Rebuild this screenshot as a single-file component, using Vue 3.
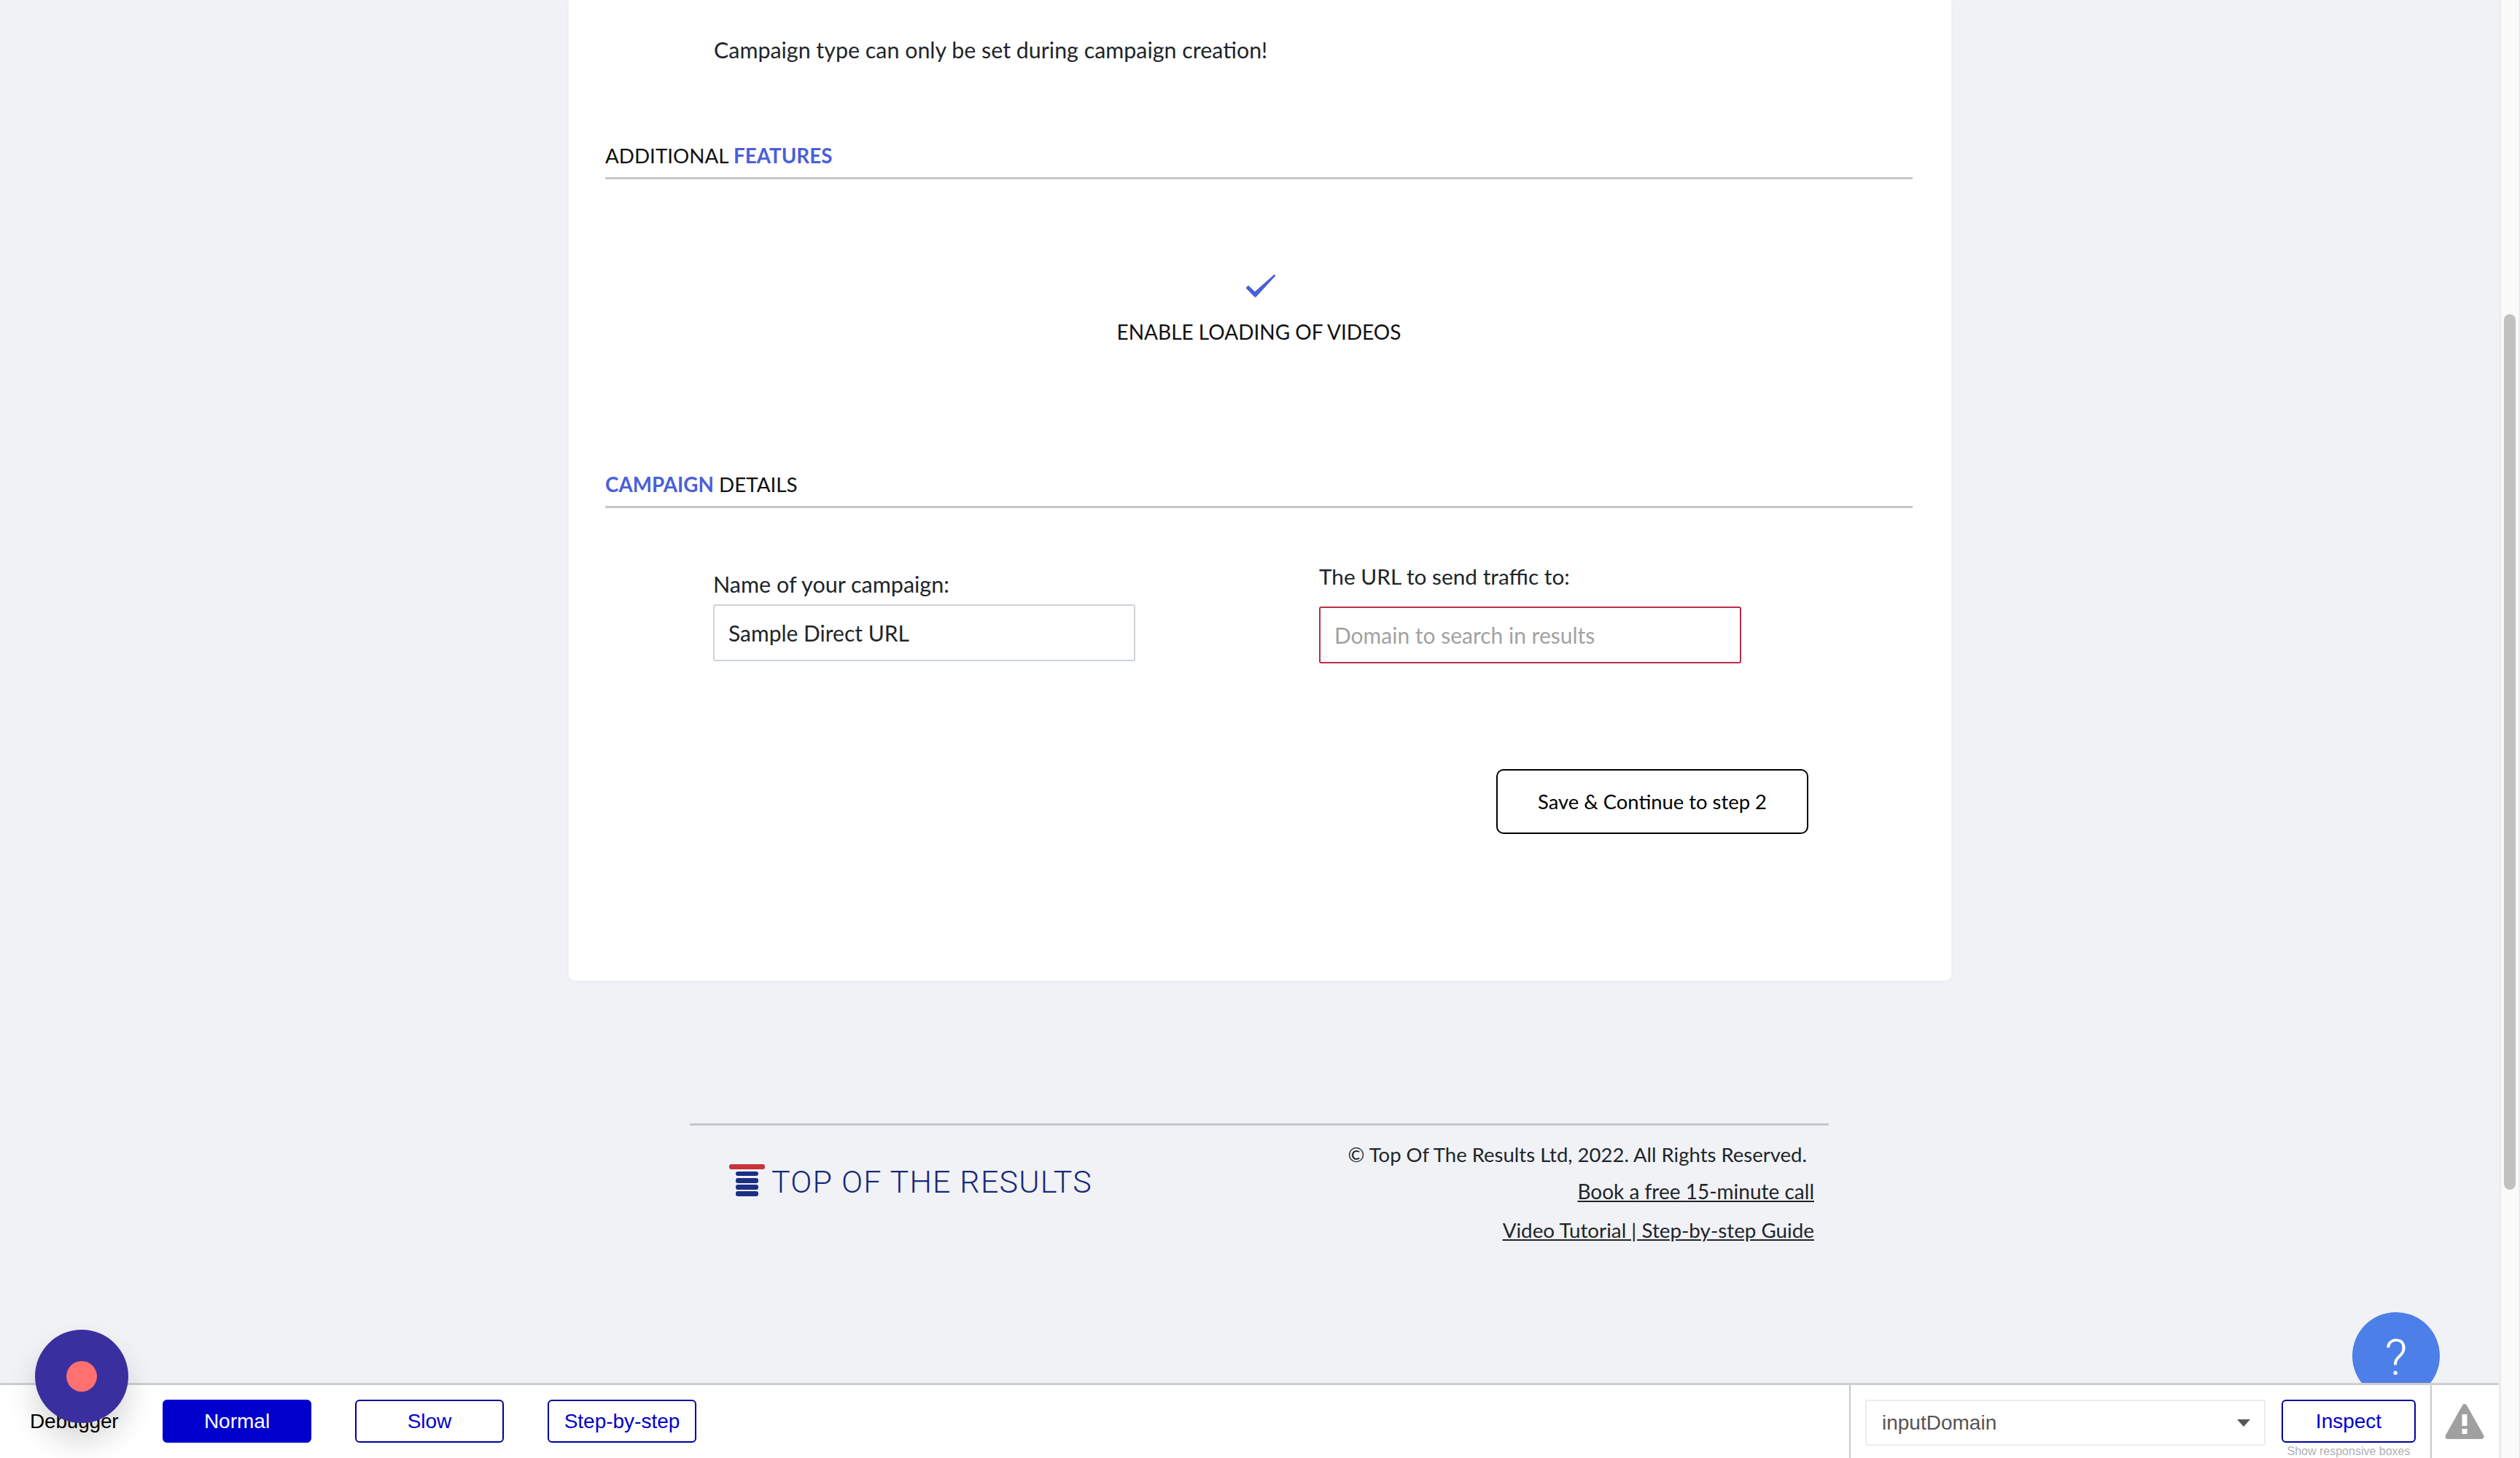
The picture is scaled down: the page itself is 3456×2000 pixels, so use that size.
<script setup>
const modes = [
  { label: 'Normal', active: true },
  { label: 'Slow', active: false },
  { label: 'Step-by-step', active: false },
]
const logoBars = [0, 1, 2, 3]
</script>

<template>
  <div class="page">
    <main class="card">
      <p class="note">Campaign type can only be set during campaign creation!</p>

      <h2 class="heading heading-first">ADDITIONAL <b>FEATURES</b></h2>

      <div class="feature">
        <svg class="check" width="42" height="32" viewBox="0 0 42 32">
          <path d="M0.5 19 L4 15.5 L13 24 L39.5 0.5 L41.5 2 L14.5 31.5 L12.5 31.5 Z" fill="#4a5fd8" />
        </svg>
        <div class="feature-label">ENABLE LOADING OF VIDEOS</div>
      </div>

      <h2 class="heading heading-second"><b>CAMPAIGN</b> DETAILS</h2>

      <div class="fields">
        <div class="field field-name">
          <label class="label label-name">Name of your campaign:</label>
          <input class="input" type="text" value="Sample Direct URL" />
        </div>
        <div class="field field-url">
          <label class="label label-url">The URL to send traffic to:</label>
          <input class="input input-error" type="text" placeholder="Domain to search in results" />
        </div>
      </div>

      <div class="actions">
        <button class="save">Save &amp; Continue to step 2</button>
      </div>
    </main>

    <footer class="footer">
      <div class="logo">
        <div class="logo-mark">
          <span class="logo-top"></span>
          <span v-for="b in logoBars" :key="b" class="logo-bar"></span>
        </div>
        <span class="logo-text">TOP OF THE RESULTS</span>
      </div>
      <div class="footer-links">
        <div class="copy">© Top Of The Results Ltd, 2022. All Rights Reserved.</div>
        <a class="flink flink-book">Book a free 15-minute call</a>
        <a class="flink flink-video">Video Tutorial | Step-by-step Guide</a>
      </div>
    </footer>

    <div class="help">?</div>

    <div class="debugbar">
      <div class="debug-left">
        <span class="debug-title">Debugger</span>
        <div class="modes">
          <button v-for="m in modes" :key="m.label" class="mode" :class="{ active: m.active }">{{ m.label }}</button>
        </div>
      </div>
      <div class="debug-right">
        <div class="select">
          <span>inputDomain</span>
          <svg width="18" height="10" viewBox="0 0 18 10"><path d="M0 0 H18 L9 10 Z" fill="#555" /></svg>
        </div>
        <div class="inspect-col">
          <button class="mode inspect">Inspect</button>
          <span class="responsive">Show responsive boxes</span>
        </div>
      </div>
      <div class="debug-warn">
        <svg width="54" height="50" viewBox="0 0 54 50">
          <path d="M27 4.5 L50 45.5 H4 Z" fill="#a0a0a0" stroke="#a0a0a0" stroke-width="7" stroke-linejoin="round" />
          <rect x="23.5" y="15" width="7" height="16" fill="#fff" />
          <rect x="23.5" y="35" width="7" height="7" fill="#fff" />
        </svg>
      </div>
    </div>

    <div class="record"><span class="record-dot"></span></div>

    <div class="scrollbar"><div class="thumb"></div></div>
  </div>
</template>

<style>
html, body { margin: 0; background: #f0f2f6; }
</style>

<style scoped>
.page {
  position: relative;
  width: 3456px;
  height: 2000px;
  overflow: hidden;
  background: #f0f2f6;
  font-family: Lato, "Liberation Sans", sans-serif;
  color: #212529;
}
.card {
  box-sizing: border-box;
  width: 1896px;
  margin: 0 0 0 780px;
  padding: 50px 53px 201px 50px;
  height: 1345px;
  background: #fff;
  border-radius: 0 0 8px 8px;
  box-shadow: 0 2px 6px rgba(60, 70, 100, 0.04);
}
.note {
  margin: 0;
  padding-left: 149px;
  font-size: 30.4px;
  line-height: 36px;
}
.heading {
  margin: 0;
  padding-bottom: 9px;
  border-bottom: 3px solid #c6c7c9;
  font-size: 27.8px;
  line-height: 40px;
  font-weight: 400;
  color: #111;
}
.heading b { color: #4a5fd8; font-weight: 700; }
.heading-first { margin-top: 108px; }
.heading-second { margin-top: 172px; }
.feature {
  display: flex;
  flex-direction: column;
  align-items: center;
  margin-top: 130px;
}
.check { display: block; margin-left: 4px; }
.feature-label {
  margin-top: 29px;
  font-size: 28px;
  line-height: 36px;
  color: #111;
}
.fields { display: flex; align-items: flex-start; padding-left: 148px; gap: 252px; }
.field { width: 579px; display: flex; flex-direction: column; }
.field-name { margin-top: 86px; }
.field-url { margin-top: 76px; }
.label { line-height: 36px; }
.label-name { margin-bottom: 10px; font-size: 30.5px; }
.label-url { margin-bottom: 23px; font-size: 29.8px; }
.input {
  box-sizing: border-box;
  width: 100%;
  height: 78px;
  padding: 0 19px;
  border: 2px solid #ced4da;
  border-radius: 3px;
  outline: none;
  background: #fff;
  font-family: inherit;
  font-size: 30px;
  color: #212529;
}
.input::placeholder { color: #a2a2a2; opacity: 1; }
.input-error { border-color: #bb2d47; }
.actions { display: flex; justify-content: flex-end; padding-right: 143px; margin-top: 145px; }
.save {
  box-sizing: border-box;
  width: 428px;
  height: 89px;
  border: 2px solid #000;
  border-radius: 10px;
  background: #fff;
  font-family: inherit;
  font-size: 27.4px;
  color: #000;
}
.footer {
  box-sizing: border-box;
  width: 1562px;
  margin: 196px 0 0 946px;
  border-top: 3px solid #c4c6cc;
  display: flex;
  justify-content: space-between;
  align-items: flex-start;
}
.logo { display: flex; align-items: flex-start; margin: 53px 0 0 54px; gap: 9px; }
.logo-mark { width: 49px; display: flex; flex-direction: column; align-items: center; gap: 2.5px; }
.logo-top { width: 49px; height: 7px; background: #c9323b; border-radius: 3px; }
.logo-bar { width: 31px; height: 6.8px; background: #1b2f85; border-radius: 3px; }
.logo-text {
  margin-top: 4px;
  font-family: Roboto, sans-serif;
  font-weight: 300;
  font-size: 43px;
  line-height: 40px;
  color: #172a78;
  letter-spacing: 1.2px;
}
.footer-links {
  padding: 22px 20px 0 0;
  display: flex;
  flex-direction: column;
  align-items: flex-end;
  font-size: 27.5px;
  line-height: 36px;
}
.copy { padding-right: 10px; }
.flink { text-decoration: underline; font-size: 28px; }
.flink-book { margin-top: 14px; }
.flink-video { margin-top: 18px; font-size: 27.8px; }
.help {
  position: absolute;
  left: 3226px;
  top: 1800px;
  width: 120px;
  height: 120px;
  border-radius: 50%;
  background: #4d7fe8;
  color: #fff;
  font-family: Roboto, sans-serif;
  font-weight: 300;
  font-size: 68px;
  line-height: 126px;
  text-align: center;
  overflow: hidden;
}
.debugbar {
  position: absolute;
  left: 0;
  top: 1897px;
  width: 3427px;
  height: 103px;
  box-sizing: border-box;
  border-top: 3px solid #cfcfcf;
  background: #fff;
  display: flex;
  font-family: "Liberation Sans", Arial, sans-serif;
}
.debug-left { width: 2536px; display: flex; align-items: flex-start; padding: 20px 0 0 41px; box-sizing: border-box; }
.debug-title { width: 182px; margin-top: 14px; font-size: 28px; line-height: 32px; color: #000; letter-spacing: -0.2px; }
.modes { display: flex; gap: 60px; }
.mode {
  box-sizing: border-box;
  width: 204px;
  height: 59px;
  padding: 0;
  border: 2px solid #00009c;
  border-radius: 6px;
  background: #fff;
  color: #0000cd;
  font-family: inherit;
  font-size: 28px;
}
.mode.active { background: #0000cd; border-color: #0000cd; color: #fff; }
.debug-right {
  box-sizing: border-box;
  width: 799px;
  border-left: 2px solid #c8c8c8;
  border-right: 2px solid #c8c8c8;
  padding: 20px 20px 0 20px;
  display: flex;
  align-items: flex-start;
  gap: 22px;
}
.select {
  box-sizing: border-box;
  width: 551px;
  height: 63px;
  padding: 0 19px 0 21px;
  display: flex;
  align-items: center;
  justify-content: space-between;
  border: 2px solid #ececec;
  border-radius: 3px;
  font-size: 28px;
  color: #555;
}
.inspect-col { display: flex; flex-direction: column; align-items: center; width: 184px; }
.inspect { width: 184px; }
.responsive { margin-top: 3px; font-size: 16px; line-height: 18px; color: #aeb1b6; white-space: nowrap; }
.debug-warn { flex: 1; padding: 25px 0 0 18px; }
.record {
  position: absolute;
  left: 48px;
  top: 1824px;
  width: 128px;
  height: 128px;
  border-radius: 50%;
  background: #3a2f9f;
  box-shadow: 0 24px 40px rgba(0, 0, 0, 0.16);
  display: flex;
  align-items: center;
  justify-content: center;
}
.record-dot { width: 42px; height: 42px; border-radius: 50%; background: #ff7070; }
.scrollbar {
  position: absolute;
  right: 0;
  top: 0;
  box-sizing: border-box;
  width: 28px;
  height: 2000px;
  background: #fafafa;
  border-left: 2px solid #e9e9e9;
  border-right: 2px solid #ececec;
  padding: 431px 0 0 4px;
}
.thumb { width: 16px; height: 1201px; border-radius: 8px; background: #c1c1c1; }
</style>
